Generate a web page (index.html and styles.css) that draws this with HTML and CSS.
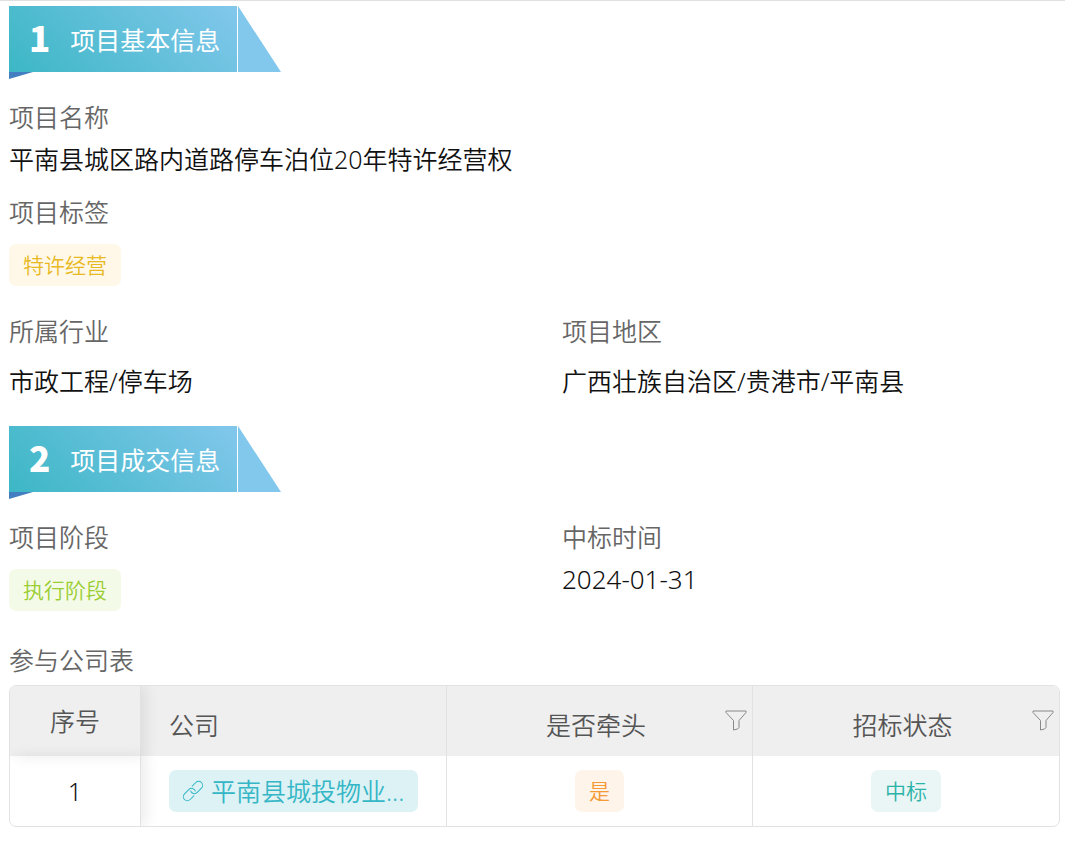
FILE: index.html
```html
<!DOCTYPE html>
<html lang="zh-CN">
<head>
<meta charset="utf-8">
<meta name="viewport" content="width=device-width, initial-scale=1">
<title>平南县城区路内道路停车泊位20年特许经营权</title>
<link rel="stylesheet" href="styles.css">
</head>
<body>
<main class="page">
  <section class="section">
    <header class="banner">
      <div class="banner-body">
        <span class="banner-number">1</span>
        <h2 class="banner-title">项目基本信息</h2>
      </div>
      <svg class="banner-tail" viewBox="0 0 43 66" preserveAspectRatio="none" aria-hidden="true"><path d="M0 0L43 66H0Z"/></svg>
    </header>
    <dl class="fields">
      <div class="field field-wide">
        <dt class="label">项目名称</dt>
        <dd class="value">平南县城区路内道路停车泊位20年特许经营权</dd>
      </div>
      <div class="field field-wide field-roomy">
        <dt class="label">项目标签</dt>
        <dd class="value"><span class="tag tag-gold">特许经营</span></dd>
      </div>
      <div class="field field-roomy field-spaced">
        <dt class="label">所属行业</dt>
        <dd class="value">市政工程/停车场</dd>
      </div>
      <div class="field field-roomy field-spaced">
        <dt class="label">项目地区</dt>
        <dd class="value">广西壮族自治区/贵港市/平南县</dd>
      </div>
    </dl>
  </section>

  <section class="section">
    <header class="banner">
      <div class="banner-body">
        <span class="banner-number">2</span>
        <h2 class="banner-title">项目成交信息</h2>
      </div>
      <svg class="banner-tail" viewBox="0 0 43 66" preserveAspectRatio="none" aria-hidden="true"><path d="M0 0L43 66H0Z"/></svg>
    </header>
    <dl class="fields">
      <div class="field field-roomy">
        <dt class="label">项目阶段</dt>
        <dd class="value"><span class="tag tag-lime">执行阶段</span></dd>
      </div>
      <div class="field">
        <dt class="label">中标时间</dt>
        <dd class="value value-date">2024-01-31</dd>
      </div>
    </dl>

    <h3 class="label table-title" id="companies">参与公司表</h3>
    <div class="table-frame">
      <table class="table" aria-labelledby="companies">
        <thead>
          <tr>
            <th class="col-index" scope="col">序号</th>
            <th class="col-company" scope="col"><div class="head"><span class="head-text">公司</span></div></th>
            <th scope="col">
              <div class="head head-filtered">
                <span class="head-text">是否牵头</span>
                <button class="filter" type="button" aria-label="筛选是否牵头"><svg class="filter-icon" viewBox="0 0 22 22" aria-hidden="true"><path d="M1 1H21V2.500L14 10.500V17.500L12.500 19L8.500 20V10.500L1 2.500Z"/></svg></button>
              </div>
            </th>
            <th scope="col">
              <div class="head head-filtered">
                <span class="head-text">招标状态</span>
                <button class="filter" type="button" aria-label="筛选招标状态"><svg class="filter-icon" viewBox="0 0 22 22" aria-hidden="true"><path d="M1 1H21V2.500L14 10.500V17.500L12.500 19L8.500 20V10.500L1 2.500Z"/></svg></button>
              </div>
            </th>
          </tr>
        </thead>
        <tbody>
          <tr>
            <td class="col-index">1</td>
            <td class="col-company">
              <a class="company" href="#companies">
                <svg class="link-icon" viewBox="0 0 22 22" aria-hidden="true">
                  <g transform="rotate(-45 11 11)"><path d="M8.500 15H3A4 4 0 0 1 3 7H9A4 4 0 0 1 12.500 13"/><path d="M13.500 7H19A4 4 0 0 1 19 15H13A4 4 0 0 1 9.500 9"/></g>
                </svg>
                <span class="company-name">平南县城投物业...</span>
              </a>
            </td>
            <td><span class="tag tag-orange">是</span></td>
            <td><span class="tag tag-teal">中标</span></td>
          </tr>
        </tbody>
      </table>
    </div>
  </section>
</main>
</body>
</html>
```
FILE: styles.css
```css
* {
  box-sizing: border-box;
}

body {
  margin: 0;
  background: #fff;
  color: #111;
  font-family: "Noto Sans", "Noto Sans CJK SC", sans-serif;
  font-size: 25px;
  font-weight: 350;
  line-height: 36px;
}

h2, h3, dl, dd {
  margin: 0;
  font-size: inherit;
  font-weight: inherit;
}

.page {
  padding: 5px 5px 16px 9px;
  border-top: 1px solid #e0e0e0;
}

.section + .section {
  margin-top: 27px;
}

/* Ribbon heading */
.banner {
  display: flex;
  gap: 1px;
  height: 66px;
  position: relative;
}

.banner::after {
  content: "";
  position: absolute;
  top: 100%;
  left: 0;
  width: 24px;
  height: 7px;
  background: #437fc0;
  clip-path: polygon(0 0, 100% 0, 0 100%);
}

.banner-body {
  display: flex;
  align-items: center;
  gap: 20px;
  padding: 0 17px 0 20px;
  background: linear-gradient(45deg, #3cb7c5, #82c7ec);
  color: #fff;
}

.banner-number {
  padding-bottom: 4px;
  font-family: "Noto Sans CJK SC", sans-serif;
  font-size: 35px;
  font-weight: 900;
}

.banner-title {
  padding-top: 2px;
  font-weight: 400;
}

.banner-tail {
  width: 43px;
  height: 66px;
  fill: #82c7ec;
}

/* Labelled values */
.fields {
  display: grid;
  grid-template-columns: 1fr 1fr;
  column-gap: 55px;
  row-gap: 17px;
  padding-top: 27px;
}

.field {
  display: flex;
  flex-direction: column;
  gap: 6px;
}

.field-wide {
  grid-column: 1 / -1;
}

.field-roomy {
  gap: 14px;
}

.field-spaced {
  padding-top: 10px;
}

.label {
  color: #666;
}

.value {
  display: flex;
}

.value-date {
  font-size: 26px;
}

.tag {
  display: inline-block;
  padding: 0 14px;
  border-radius: 7px;
  font-size: 21px;
  line-height: 42px;
}

.tag-gold {
  background: #fff8e8;
  color: #e8b923;
}

.tag-lime {
  background: #f4fae8;
  color: #9acd32;
}

.tag-orange {
  background: #fef4e9;
  color: #f59a35;
}

.tag-teal {
  background: #eaf6f6;
  color: #2bb3a8;
}

/* Company table */
.table-title {
  margin-top: 31px;
}

.table-frame {
  margin-top: 7px;
  overflow: hidden;
  border: 1px solid #e2e2e2;
  border-radius: 7px;
}

.table {
  width: 100%;
  table-layout: fixed;
  border-spacing: 0;
}

.table th,
.table td {
  height: 70px;
  padding: 0;
  border-right: 1px solid #e2e2e2;
  text-align: center;
  vertical-align: middle;
}

.table th:last-child,
.table td:last-child {
  border-right: 0;
}

.table th {
  background: #efefef;
  color: #555;
  font-weight: inherit;
}

.table .col-index {
  width: 131px;
  position: relative;
  box-shadow: 5px 0 14px rgba(0, 0, 0, 0.08);
}

.table .col-company {
  padding: 0 28px;
  text-align: left;
}

.head {
  display: flex;
  align-items: center;
}

.head-text {
  flex: 1;
  padding-top: 8px;
}

.head-filtered {
  padding-right: 5px;
}

.head-filtered .head-text {
  padding-left: 20px;
}

.filter {
  display: flex;
  padding: 0;
  border: 0;
  background: none;
  cursor: pointer;
}

.filter-icon {
  width: 22px;
  height: 22px;
  fill: none;
  stroke: #888;
  stroke-width: 1;
}

.company {
  display: flex;
  align-items: center;
  gap: 7px;
  height: 42px;
  padding: 0 13px;
  border-radius: 7px;
  background: #dcf2f5;
  color: #35b6c6;
  text-decoration: none;
  white-space: nowrap;
}

.link-icon {
  flex: none;
  width: 22px;
  height: 22px;
  fill: none;
  stroke: currentColor;
  stroke-width: 1;
}
```
